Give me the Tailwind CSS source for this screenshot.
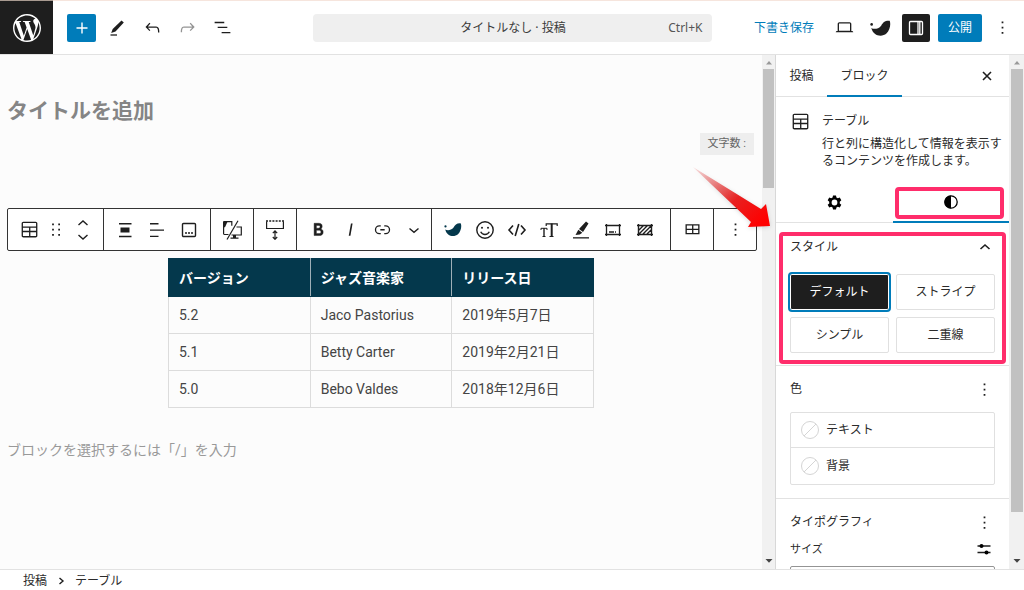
<!DOCTYPE html>
<html lang="ja">
<head>
<meta charset="utf-8">
<meta name="viewport" content="width=device-width, initial-scale=1">
<title>タイトルなし · 投稿</title>
<script src="https://cdn.jsdelivr.net/npm/@tailwindcss/browser@4"></script>
</head>
<body class="flex h-screen flex-col overflow-hidden bg-white font-['Noto_Sans','Noto_Sans_CJK_JP',sans-serif] text-[12px] leading-4 text-[#2b2b2b]">
<svg class="hidden" aria-hidden="true">
  <symbol id="table" viewBox="0 0 24 24"><path d="M19 3H5c-1.1 0-2 .9-2 2v14c0 1.1.9 2 2 2h14c1.1 0 2-.9 2-2V5c0-1.1-.9-2-2-2zM5 4.5h14c.3 0 .5.2.5.5v3.5h-15V5c0-.3.2-.5.5-.5zm8 5.500h6.500v3.500H13V10zm-1.500 3.500h-7V10h7v3.500zm-7 5.500v-4h7v4.500H5c-.3 0-.5-.2-.5-.5zm14.500.5h-6V15h6.500v4c0 .3-.2.5-.5.5z"/></symbol>
  <symbol id="more" viewBox="0 0 24 24"><path d="M13 19h-2v-2h2v2zm0-6h-2v-2h2v2zm0-6h-2V5h2v2z"/></symbol>
  <symbol id="bird" viewBox="0 0 64 54"><circle cx="5" cy="16" r="4"/><path d="M4 27C12 32 26 30 34 20C40 10 45 4 60 5C64 14 61 34 50 44C36 56 10 52 4 27Z"/></symbol>
  <symbol id="none" viewBox="0 0 20 20"><circle cx="10" cy="10" r="8.500" fill="none" stroke="#d5d5d5"/><path d="M4 16L16 4" stroke="#d5d5d5"/></symbol>
</svg>

<div class="flex h-px shrink-0 bg-[#f6e5dd]"><div class="w-[53px] bg-[#a89a90]"></div></div>

<header class="flex h-[54px] shrink-0 items-center border-b border-[#e2e2e2] bg-white">
  <a href="#" aria-label="投稿一覧を表示" class="flex h-[53px] w-[53px] shrink-0 items-center justify-center bg-[#1e1e1e]">
    <svg class="size-7 fill-white" viewBox="0 0 24 24"><path d="M21.469 6.825c.84 1.537 1.318 3.3 1.318 5.175 0 3.979-2.156 7.456-5.363 9.325l3.295-9.527c.615-1.54.82-2.771.82-3.864 0-.405-.026-.78-.07-1.11m-7.981.105c.647-.03 1.232-.105 1.232-.105.582-.075.514-.93-.067-.899 0 0-1.755.135-2.88.135-1.064 0-2.85-.15-2.85-.15-.585-.03-.661.855-.075.885 0 0 .54.061 1.125.09l1.68 4.605-2.37 7.08L5.354 6.9c.649-.03 1.234-.1 1.234-.1.585-.075.516-.93-.065-.896 0 0-1.746.138-2.874.138-.2 0-.438-.008-.69-.015C4.911 3.15 8.235 1.215 12 1.215c2.809 0 5.365 1.072 7.286 2.833-.046-.003-.091-.009-.141-.009-1.06 0-1.812.923-1.812 1.914 0 .89.513 1.643 1.06 2.531.411.72.89 1.643.89 2.977 0 .915-.354 1.994-.821 3.479l-1.075 3.585-3.9-11.61.001.014zM12 22.784c-1.059 0-2.081-.153-3.048-.437l3.237-9.406 3.315 9.087c.024.053.05.101.078.149-1.12.393-2.325.609-3.582.609M1.211 12c0-1.564.336-3.05.935-4.39L7.29 21.709C3.694 19.96 1.212 16.271 1.211 12M12 0C5.385 0 0 5.385 0 12s5.385 12 12 12 12-5.385 12-12S18.615 0 12 0"/></svg>
  </a>
  <div class="ml-3.5 flex shrink-0 items-center gap-[7px]">
    <button aria-label="ブロック挿入ツール" class="flex h-7 w-[29px] items-center justify-center rounded-xs bg-[#007cba]"><svg class="size-5" viewBox="0 0 20 20"><path d="M10 4.500v11M4.500 10h11" stroke="#fff" stroke-width="1.400"/></svg></button>
    <button aria-label="ツール" class="flex size-7 items-center justify-center"><svg class="size-5" viewBox="0 0 20 20"><path d="M14.500 2.500l2.300 2.100-8.300 9-4.300 1.300 1.500-4z" fill="#1e1e1e"/><path d="M3.500 17h6.500" stroke="#1e1e1e" stroke-width="1.300"/></svg></button>
    <button aria-label="元に戻す" class="flex size-7 items-center justify-center"><svg class="size-[21px] fill-[#1e1e1e]" viewBox="0 0 24 24"><path d="M18.300 11.700c-.6-.6-1.400-.9-2.300-.9H6.700l2.900-3.300-1.100-1-4.500 5L8.500 16l1-1-2.700-2.700H16c.5 0 .9.2 1.300.5 1 1 1 3.400 1 4.500v.3h1.500v-.2c0-1.500 0-4.300-1.500-5.700z"/></svg></button>
    <button aria-label="やり直す" class="flex size-7 items-center justify-center"><svg class="size-[21px] fill-[#949494]" viewBox="0 0 24 24"><path d="M15.600 6.500l-1.100 1 2.900 3.300H8c-.9 0-1.700.3-2.300.9-1.400 1.500-1.400 4.200-1.400 5.600v.2h1.500v-.3c0-1.100 0-3.500 1-4.500.3-.3.7-.5 1.300-.5h9.200L14.500 15l1.100 1.100 4.600-4.600-4.600-5z"/></svg></button>
    <button aria-label="リスト表示" class="flex size-7 items-center justify-center"><svg class="size-[21px] fill-[#1e1e1e]" viewBox="0 0 24 24"><path d="M3 5.500h11V7H3V5.500Zm3.500 5.500h11v1.500h-11V11ZM21 17H11v1.500h10V17Z"/></svg></button>
  </div>
  <div class="flex flex-1 justify-center pr-4 pl-[52px]">
    <button class="flex h-7 w-full max-w-[399px] items-center rounded-sm bg-[#efefef] px-2.5 text-[#3c3c3c]">
      <span class="w-12"></span><span class="flex-1 text-center">タイトルなし · 投稿</span><span class="w-12 text-right text-[#555]">Ctrl+K</span>
    </button>
  </div>
  <div class="flex shrink-0 items-center gap-2 pr-2.5">
    <button class="mr-2 text-[12px] text-[#007cba]">下書き保存</button>
    <button aria-label="表示" class="flex size-7 items-center justify-center"><svg class="size-[21px] fill-[#1e1e1e]" viewBox="0 0 24 24"><path d="M20.500 16h-.7V8c0-1.100-.9-2-2-2H6.200c-1.100 0-2 .9-2 2v8h-.7c-.8 0-1.500.7-1.500 1.500h20c0-.8-.7-1.500-1.500-1.500zM5.700 8c0-.3.2-.5.5-.5h11.600c.3 0 .5.2.5.5v7.600H5.700V8z"/></svg></button>
    <button aria-label="SWELL設定" class="flex size-7 items-center justify-center"><svg class="h-[18px] w-[21px] fill-[#1e1e1e]"><use href="#bird"/></svg></button>
    <button aria-label="設定" aria-pressed="true" class="flex size-7 items-center justify-center rounded-xs bg-[#1e1e1e]"><svg class="size-5" viewBox="0 0 20 20" fill="none" stroke="#fff" stroke-width="1.300"><rect x="3.500" y="3.500" width="13" height="13" rx="1"/><path d="M12 3.500v13M13.800 3.500v13"/></svg></button>
    <button class="h-7 w-11 rounded-xs bg-[#007cba] text-white">公開</button>
    <button aria-label="オプション" class="flex h-7 w-6 items-center justify-center"><svg class="size-[21px] shrink-0 fill-[#1e1e1e]"><use href="#more"/></svg></button>
  </div>
</header>

<div class="relative flex min-h-0 flex-1">
  <main class="min-w-0 flex-1 overflow-hidden bg-[#fcfcfc] px-[7px] font-[Roboto,'Noto_Sans_CJK_JP',sans-serif]">
    <input aria-label="タイトルを追加" placeholder="タイトルを追加" class="mt-10 block h-8 w-full text-[21px] font-bold outline-none placeholder:text-[#858585] placeholder:opacity-100">
    <div class="mt-1.5 flex justify-end pr-px"><span class="bg-[#eeeeee] px-2 py-[3px] text-[11px] text-[#666]">文字数 :</span></div>

    <div role="toolbar" aria-label="ブロックツール" class="mt-[53px] flex h-[43px] w-fit divide-x divide-[#333] rounded-xs border border-[#333] bg-white">
      <div class="flex items-center px-[5px]">
        <button aria-label="テーブル" class="flex h-9 w-8 items-center justify-center"><svg class="size-[21px] fill-[#1e1e1e]"><use href="#table"/></svg></button>
        <button aria-label="ドラッグ" class="flex h-9 w-[22px] items-center justify-center"><svg class="size-[21px] shrink-0 fill-[#1e1e1e]" viewBox="0 0 24 24"><path d="M7 7h2V5H7v2zm0 6h2v-2H7v2zm0 6h2v-2H7v2zm7-14v2h2V5h-2zm0 8h2v-2h-2v2zm0 6h2v-2h-2v2z"/></svg></button>
        <div class="flex w-[31px] flex-col items-center">
          <button aria-label="上に移動" class="flex h-[14px] w-6 items-center justify-center"><svg class="h-2 w-3" viewBox="0 0 12 8"><path d="M1.500 6L6 2l4.500 4" fill="none" stroke="#1e1e1e" stroke-width="1.400"/></svg></button>
          <button aria-label="下に移動" class="flex h-[14px] w-6 items-center justify-center"><svg class="h-2 w-3" viewBox="0 0 12 8"><path d="M1.500 2L6 6l4.500-4" fill="none" stroke="#1e1e1e" stroke-width="1.400"/></svg></button>
        </div>
      </div>
      <div class="flex items-center px-[5px]">
        <button aria-label="配置" class="flex h-9 w-8 items-center justify-center"><svg class="size-5" viewBox="0 0 20 20" fill="#1e1e1e"><path d="M4 3h12.500v1.500H4zM5.500 7.500h9v5h-9zM4 15.800h12.500v1.500H4z"/></svg></button>
        <button aria-label="カラム揃え" class="flex h-9 w-8 items-center justify-center"><svg class="size-5" viewBox="0 0 20 20" fill="#1e1e1e"><path d="M3 3h8.500v1.400H3zM3 9.400h14v1.400H3zM3 15.700h8.500v1.400H3z"/></svg></button>
        <button aria-label="キャプション" class="flex h-9 w-8 items-center justify-center"><svg class="size-5" viewBox="0 0 20 20"><rect x="3.500" y="3.500" width="13" height="13" rx="1" fill="none" stroke="#1e1e1e" stroke-width="1.400"/><path d="M6 12.200h2v1.500H6zM9 12.200h2v1.500H9zM12 12.200h2v1.500h-2z" fill="#1e1e1e"/></svg></button>
      </div>
      <div class="flex items-center px-[5px]">
        <button aria-label="表示デバイス" class="flex h-9 w-8 items-center justify-center"><svg class="h-5 w-[21px]" viewBox="0 0 21 20" fill="none" stroke="#1e1e1e" stroke-width="1.200"><path d="M1.600 1.500v12.500M1.600 1.700h8.200v4M14.500 7h4.800v8H9.500M1.500 14.500h5"/><path d="M16 .8L5 19.500"/><path d="M1.500 1.700h4l-2.500 5.500H1.500zM11 15h3v2.500h2.500v1.300H8.500v-1.300H11z" fill="#1e1e1e" stroke="none"/></svg></button>
      </div>
      <div class="flex items-center px-[5px]">
        <button aria-label="余白" class="flex h-9 w-8 items-center justify-center"><svg class="h-5 w-5" viewBox="0 0 20 20" fill="none" stroke="#1e1e1e" stroke-width="1.200"><path d="M1.600 1.500v7h16.800v-7"/><path d="M1 1h18" stroke-dasharray="2 1.200" stroke-width="1.400"/><path d="M10 11.500v7M7.800 13.200l2.200-2.300 2.200 2.300M7.800 17l2.200 2.300 2.200-2.300"/></svg></button>
      </div>
      <div class="flex items-center pr-px pl-[5px]">
        <button aria-label="太字" class="flex h-9 w-8 items-center justify-center"><svg class="size-[21px] fill-[#1e1e1e] stroke-[#1e1e1e]" stroke-width=".5" viewBox="0 0 24 24"><path d="M14.700 11.300c1-.6 1.500-1.600 1.500-3 0-2.300-1.300-3.400-4-3.400H7v14h5.800c1.400 0 2.500-.3 3.300-1 .8-.7 1.200-1.700 1.200-2.900.1-1.900-.8-3.100-2.600-3.700zm-5.100-4h2.300c.6 0 1.100.1 1.400.4.3.3.5.7.5 1.200s-.2 1-.5 1.200c-.3.3-.8.4-1.400.4H9.600V7.300zm4.600 9c-.4.3-1 .4-1.700.4H9.600v-3.900h2.900c.7 0 1.300.2 1.700.5.4.3.6.8.6 1.500s-.2 1.200-.6 1.500z"/></svg></button>
        <button aria-label="イタリック" class="flex h-9 w-8 items-center justify-center"><svg class="size-[21px] fill-[#1e1e1e]" viewBox="0 0 24 24"><path d="M12.500 5L10 19h1.900l2.500-14z"/></svg></button>
        <button aria-label="リンク" class="flex h-9 w-8 items-center justify-center"><svg class="size-[21px] fill-[#1e1e1e]" viewBox="0 0 24 24"><path d="M10 17.389H8.444A5.194 5.194 0 1 1 8.444 7H10v1.500H8.444a3.694 3.694 0 0 0 0 7.389H10v1.500ZM14 7h1.556a5.194 5.194 0 0 1 0 10.390H14v-1.500h1.556a3.694 3.694 0 0 0 0-7.390H14V7Zm-4.500 6h5v-1.500h-5V13Z"/></svg></button>
        <button aria-label="さらに表示" class="flex h-9 w-8 items-center justify-center"><svg class="h-2 w-3" viewBox="0 0 12 8"><path d="M1.500 2.500L6 6.300l4.500-3.800" fill="none" stroke="#1e1e1e" stroke-width="1.400"/></svg></button>
      </div>
      <div class="flex items-center pr-[9px] pl-[5px]">
        <button aria-label="SWELL装飾" class="flex h-9 w-8 items-center justify-center"><svg class="h-[15px] w-[18px] fill-[#04384c]"><use href="#bird"/></svg></button>
        <button aria-label="アイコン" class="flex h-9 w-8 items-center justify-center"><svg class="size-5" viewBox="0 0 20 20" fill="none" stroke="#1e1e1e" stroke-width="1.400"><circle cx="10" cy="10" r="8.200"/><path d="M5.700 11.800c1.700 3.600 6.900 3.600 8.600 0"/><circle cx="7" cy="7.700" r="1" fill="#1e1e1e" stroke="none"/><circle cx="13" cy="7.700" r="1" fill="#1e1e1e" stroke="none"/></svg></button>
        <button aria-label="コード" class="flex h-9 w-8 items-center justify-center"><svg class="size-5" viewBox="0 0 20 20" fill="none" stroke="#1e1e1e" stroke-width="1.600"><path d="M6 5.500L2 10l4 4.500M14 5.500l4 4.500-4 4.500M11.800 4L8.200 16"/></svg></button>
        <button aria-label="文字サイズ" class="flex h-9 w-8 items-center justify-center"><svg class="size-5" viewBox="0 0 20 20" fill="none" stroke="#1e1e1e"><path d="M7.200 6V3.800h11V6M10.500 16.500h4" stroke-width="1.200"/><path d="M12.700 3.500v13" stroke-width="2"/><path d="M2 10V8.300h6V10M3.500 16.500h3" stroke-width="1"/><path d="M5 8v8.500" stroke-width="1.400"/></svg></button>
        <button aria-label="マーカー" class="flex h-9 w-8 items-center justify-center"><svg class="size-5" viewBox="0 0 20 20" fill="#1e1e1e"><path d="M15 1.500l2.500 2-5.500 8.500-4-3zM7.300 9.700l4 3-2.500 1.800-4.300.5z"/><path d="M2 17.200h16v1.300H2z"/></svg></button>
        <button aria-label="余白ボックス" class="flex h-9 w-8 items-center justify-center"><svg class="size-5" viewBox="0 0 20 20" fill="none" stroke="#1e1e1e" stroke-width="1.300"><path d="M3.500 4v12M16.500 4v12M2 5.500h16M2 14.500h16"/><path d="M6 12h8" stroke-dasharray="5 1 1 1"/></svg></button>
        <button aria-label="背景パターン" class="flex h-9 w-8 items-center justify-center"><svg class="size-5" viewBox="0 0 20 20" fill="none" stroke="#1e1e1e" stroke-width="1.400"><path d="M3.500 4v12M16.500 4v12M2 5.500h16M2 14.500h16M4 10l4.500-4.500M4 14l8.500-8.500M8 14l8.500-8.500M12 14l4-4"/></svg></button>
      </div>
      <div class="flex items-center px-[5px]">
        <button aria-label="表を編集" class="flex h-9 w-8 items-center justify-center"><svg class="size-[21px] fill-[#1e1e1e]" viewBox="0 0 24 24"><path d="M4 6v11.500h16V6H4zm1.500 1.500h6V11h-6V7.500zm0 8.500v-3.500h6V16h-6zm13 0H13v-3.500h5.500V16zM13 11V7.500h5.500V11H13z"/></svg></button>
      </div>
      <div class="flex items-center px-[5px]">
        <button aria-label="オプション" class="flex h-9 w-8 items-center justify-center"><svg class="size-[21px] fill-[#1e1e1e]"><use href="#more"/></svg></button>
      </div>
    </div>

    <table class="mx-auto mt-[7px] w-[426px] table-fixed border-collapse text-left text-[14px] leading-5 text-[#444]">
      <thead><tr class="h-[38px] bg-[#04384c] text-white">
        <th class="border border-[#9fb0b8] border-y-[#04384c] first:border-l-[#04384c] last:border-r-[#04384c] px-2.5 font-bold">バージョン</th>
        <th class="border border-[#9fb0b8] border-y-[#04384c] px-2.5 font-bold">ジャズ音楽家</th>
        <th class="border border-[#9fb0b8] border-y-[#04384c] last:border-r-[#04384c] px-2.5 font-bold">リリース日</th>
      </tr></thead>
      <tbody>
        <tr class="h-[37px]"><td class="border border-[#dcdcdc] px-2.5">5.2</td><td class="border border-[#dcdcdc] px-2.5">Jaco Pastorius</td><td class="border border-[#dcdcdc] px-2.5">2019年5月7日</td></tr>
        <tr class="h-[37px]"><td class="border border-[#dcdcdc] px-2.5">5.1</td><td class="border border-[#dcdcdc] px-2.5">Betty Carter</td><td class="border border-[#dcdcdc] px-2.5">2019年2月21日</td></tr>
        <tr class="h-[37px]"><td class="border border-[#dcdcdc] px-2.5">5.0</td><td class="border border-[#dcdcdc] px-2.5">Bebo Valdes</td><td class="border border-[#dcdcdc] px-2.5">2018年12月6日</td></tr>
      </tbody>
    </table>
    <p class="mt-8 text-[14px] leading-5 text-[#999]">ブロックを選択するには「/」を入力</p>
  </main>

  <div class="flex w-[13px] shrink-0 flex-col items-center justify-between bg-[#f1f1f1]" aria-hidden="true">
    <div class="flex w-full flex-col items-center"><svg class="h-[14px] w-2" viewBox="0 0 8 14"><path d="M1 9.500L4 6l3 3.500z" fill="#999"/></svg><div class="h-[119px] w-[11px] bg-[#c1c1c1]"></div></div>
    <svg class="h-4 w-2" viewBox="0 0 8 16"><path d="M.5 6h7L4 9.800z" fill="#444"/></svg>
  </div>

  <aside class="flex w-[234px] shrink-0 flex-col overflow-hidden border-l border-[#d8d8d8] bg-white">
    <div class="flex h-[42px] shrink-0 items-stretch border-b border-[#e2e2e2]">
      <button class="w-[51px]">投稿</button>
      <button class="-mb-px w-[75px] border-b-2 border-[#007cba] pt-0.5">ブロック</button>
      <button aria-label="設定を閉じる" class="mr-2 ml-auto flex w-7 items-center justify-center"><svg class="size-3" viewBox="0 0 12 12"><path d="M2 2l8 8M10 2l-8 8" stroke="#1e1e1e" stroke-width="1.600"/></svg></button>
    </div>
    <div class="flex shrink-0 gap-[11px] pt-[14px] pl-3.5">
      <svg class="size-[21px] shrink-0 fill-[#1e1e1e]"><use href="#table"/></svg>
      <div><h2 class="mt-0.5">テーブル</h2><p class="mt-1.5 w-[180px] leading-[17px]">行と列に構造化して情報を表示するコンテンツを作成します。</p></div>
    </div>
    <div class="mt-[13px] flex h-[41px] shrink-0 border-b border-[#e2e2e2]">
      <button aria-label="設定" class="flex flex-1 items-center justify-center"><svg class="size-[21px]" viewBox="0 0 24 24"><path fill-rule="evenodd" fill="#000" d="M10.300 4h3.400l.5 2.300 1.600.9 2.200-.8 1.800 3-1.800 1.600v2l1.800 1.600-1.800 3-2.200-.8-1.600.9-.5 2.300h-3.400l-.5-2.300-1.600-.9-2.200.8-1.800-3L6 13v-2L4.200 9.400l1.800-3 2.200.8 1.600-.9zM12 8.700a3.300 3.300 0 1 0 0 6.600 3.300 3.300 0 0 0 0-6.600z"/></svg></button>
      <button aria-label="スタイル" class="relative -mb-px flex flex-1 items-center justify-center border-b-2 border-[#007cba]"><svg class="size-4" viewBox="0 0 16 16"><circle cx="8" cy="8" r="6.200" fill="none" stroke="#000" stroke-width="1.300"/><path d="M8 1.500a6.500 6.500 0 0 0 0 13z"/></svg>
        <span class="pointer-events-none absolute inset-x-[2px] top-[5px] mr-[3px] h-8 rounded-sm border-4 border-[#ff2d6b]"></span></button>
    </div>
    <section class="relative shrink-0 border-b border-[#e2e2e2] px-3.5 pb-3">
      <button aria-expanded="true" class="flex h-[51px] w-full items-center justify-between pr-1 pb-1 text-left">スタイル<svg class="h-2 w-3" viewBox="0 0 12 8"><path d="M1.500 6L6 2l4.500 4" fill="none" stroke="#1e1e1e" stroke-width="1.600"/></svg></button>
      <div class="grid grid-cols-2 gap-[7px]">
        <button class="h-9 rounded-xs bg-[#1e1e1e] text-white outline-2 outline-[#007cba] ring-1 ring-white ring-inset">デフォルト</button>
        <button class="h-9 rounded-xs border border-[#e0e0e0]">ストライプ</button>
        <button class="h-9 rounded-xs border border-[#e0e0e0]">シンプル</button>
        <button class="h-9 rounded-xs border border-[#e0e0e0]">二重線</button>
      </div>
      <span class="pointer-events-none absolute inset-x-[3px] top-[9px] bottom-px rounded-sm border-4 border-[#ff2d6b]"></span>
    </section>
    <section class="shrink-0 border-b border-[#e2e2e2] px-3.5 pb-[13px]">
      <div class="flex h-[46px] items-center justify-between"><h2>色</h2><button aria-label="色のオプション"><svg class="size-[21px] fill-[#1e1e1e]"><use href="#more"/></svg></button></div>
      <div class="divide-y divide-[#e0e0e0] rounded-xs border border-[#e0e0e0]">
        <button class="flex h-[35px] w-full items-center gap-1.5 px-[9px]"><svg class="size-5"><use href="#none"/></svg>テキスト</button>
        <button class="flex h-9 w-full items-center gap-1.5 px-[9px]"><svg class="size-5"><use href="#none"/></svg>背景</button>
      </div>
    </section>
    <section class="shrink-0 px-3.5 pt-0.5">
      <div class="flex h-[42px] items-center justify-between"><h2>タイポグラフィ</h2><button aria-label="タイポグラフィのオプション"><svg class="size-[21px] fill-[#1e1e1e]"><use href="#more"/></svg></button></div>
      <div class="flex h-3 items-center justify-between"><label for="size" class="text-[11px]">サイズ</label><button aria-label="カスタムサイズを設定" class="mr-1"><svg class="h-3 w-[14px]" viewBox="0 0 14 12"><path d="M.5 3h13M.5 9.500h13" stroke="#1e1e1e" stroke-width="1.400"/><circle cx="4.500" cy="3" r="2"/><circle cx="9.500" cy="9.500" r="2"/></svg></button></div>
      <select id="size" class="mt-[11px] h-8 w-full appearance-none rounded-xs border border-[#949494]"><option></option></select>
    </section>
  </aside>

  <div class="flex w-[15px] shrink-0 flex-col items-center justify-between bg-[#f1f1f1]" aria-hidden="true">
    <div class="flex w-full flex-col items-center"><svg class="h-[14px] w-2" viewBox="0 0 8 14"><path d="M1 9.500L4 6l3 3.500z" fill="#999"/></svg><div class="h-[443px] w-3 bg-[#c1c1c1]"></div></div>
    <svg class="h-4 w-2" viewBox="0 0 8 16"><path d="M.5 6h7L4 9.800z" fill="#444"/></svg>
  </div>

  <svg class="pointer-events-none absolute top-[110px] right-[250px] h-[70px] w-[84px] drop-shadow-sm" viewBox="0 0 84 70" aria-hidden="true">
    <defs><linearGradient id="fade" x1="0" y1="0" x2="1" y2=".8"><stop offset="0" stop-color="#d44" stop-opacity=".15"/><stop offset=".6" stop-color="#e82020"/><stop offset="1" stop-color="#f00"/></linearGradient></defs>
    <path d="M3 2L71 44L76 39L80 61L58 62L61 57Z" fill="url(#fade)"/>
  </svg>
</div>

<footer class="flex h-[21px] shrink-0 items-center gap-2.5 border-t border-[#e2e2e2] bg-white px-[23px] pt-0.5">
  <a href="#">投稿</a>
  <svg class="h-2 w-2" viewBox="0 0 8 8"><path d="M2.500 1L6 4 2.500 7" fill="none" stroke="#1e1e1e" stroke-width="1.400"/></svg>
  <a href="#">テーブル</a>
</footer>
</body>
</html>
